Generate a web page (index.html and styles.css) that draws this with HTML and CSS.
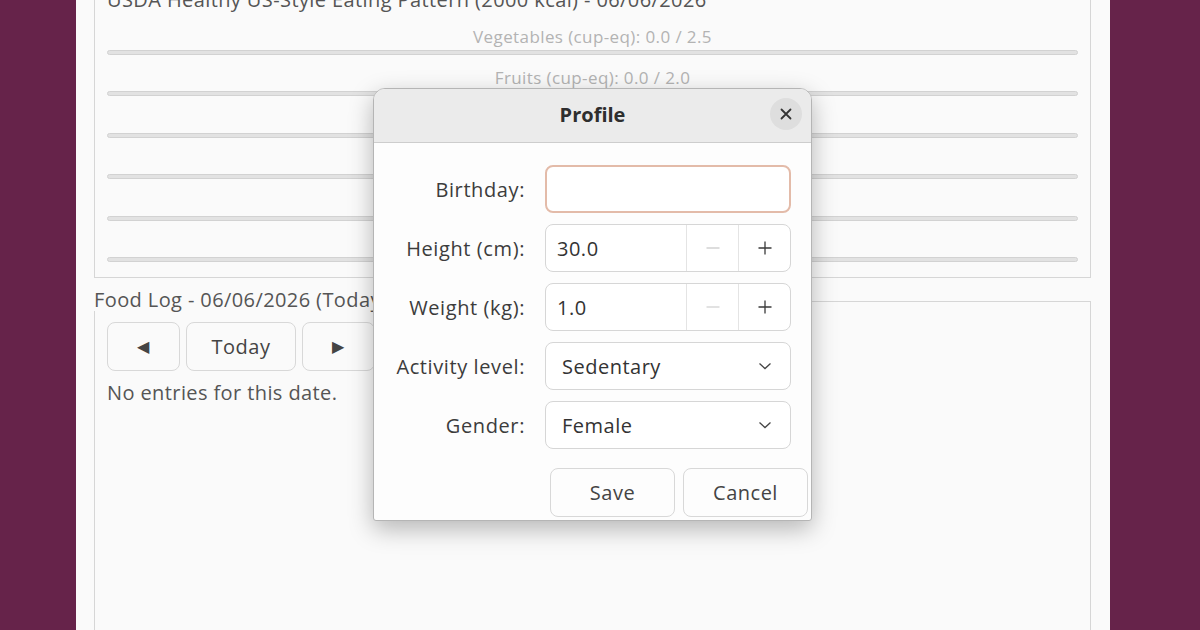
FILE: index.html
```html
<!DOCTYPE html>
<html>
<head>
  <title>Nutrition Tracker - Profile</title>
  <link rel="stylesheet" href="styles.css">
</head>
<body>

  <div class="desktop">
    <div class="window">

      <section class="frame goals">
        <div class="goals-title">USDA Healthy US-Style Eating Pattern (2000 kcal) - 06/06/2026</div>
        <div class="goal"><div class="goal-label">Vegetables (cup-eq): 0.0 / 2.5</div><div class="bar"></div></div>
        <div class="goal"><div class="goal-label">Fruits (cup-eq): 0.0 / 2.0</div><div class="bar"></div></div>
        <div class="goal"><div class="goal-label">Grains (oz-eq): 0.0 / 6.0</div><div class="bar"></div></div>
        <div class="goal"><div class="goal-label">Dairy (cup-eq): 0.0 / 3.0</div><div class="bar"></div></div>
        <div class="goal"><div class="goal-label">Protein Foods (oz-eq): 0.0 / 5.5</div><div class="bar"></div></div>
        <div class="goal"><div class="goal-label">Oils (g): 0.0 / 27.0</div><div class="bar"></div></div>
      </section>

      <section class="frame food-log">
        <div class="frame-label">Food Log - 06/06/2026 (Today)</div>
        <div class="nav">
          <button class="btn nav-arrow">&#9664;</button>
          <button class="btn nav-today">Today</button>
          <button class="btn nav-arrow">&#9654;</button>
        </div>
        <p class="empty">No entries for this date.</p>
      </section>

    </div>

    <!-- modal dialog on top of the main window -->
    <div class="dialog">
      <div class="dialog-header">
        <span class="dialog-title">Profile</span>
        <button class="close-btn">
          <svg width="12" height="12" viewBox="0 0 12 12"><path d="M1.5 1.5 L10.5 10.5 M10.5 1.5 L1.5 10.5" stroke="#333" stroke-width="1.8" stroke-linecap="round"/></svg>
        </button>
      </div>

      <div class="dialog-body">
        <div class="form-grid">
          <label>Birthday:</label>
          <div class="field focused"></div>

          <label>Height (cm):</label>
          <div class="field spin">
            <span class="spin-value">30.0</span>
            <span class="spin-btn disabled"><svg width="16" height="16" viewBox="0 0 16 16"><path d="M1.5 8 H14.5" stroke="#d2d2d2" stroke-width="1.3"/></svg></span>
            <span class="spin-btn"><svg width="16" height="16" viewBox="0 0 16 16"><path d="M1.5 8 H14.5 M8 1.5 V14.5" stroke="#3a3a3a" stroke-width="1.3"/></svg></span>
          </div>

          <label>Weight (kg):</label>
          <div class="field spin">
            <span class="spin-value">1.0</span>
            <span class="spin-btn disabled"><svg width="16" height="16" viewBox="0 0 16 16"><path d="M1.5 8 H14.5" stroke="#d2d2d2" stroke-width="1.3"/></svg></span>
            <span class="spin-btn"><svg width="16" height="16" viewBox="0 0 16 16"><path d="M1.5 8 H14.5 M8 1.5 V14.5" stroke="#3a3a3a" stroke-width="1.3"/></svg></span>
          </div>

          <label>Activity level:</label>
          <div class="field combo">
            <span>Sedentary</span>
            <svg width="14" height="8" viewBox="0 0 14 8"><path d="M1.5 1.5 L7 6.5 L12.5 1.5" fill="none" stroke="#444" stroke-width="1.3"/></svg>
          </div>

          <label>Gender:</label>
          <div class="field combo">
            <span>Female</span>
            <svg width="14" height="8" viewBox="0 0 14 8"><path d="M1.5 1.5 L7 6.5 L12.5 1.5" fill="none" stroke="#444" stroke-width="1.3"/></svg>
          </div>
        </div>

        <div class="dialog-actions">
          <button class="btn action-btn">Save</button>
          <button class="btn action-btn">Cancel</button>
        </div>
      </div>
    </div>
  </div>

</body>
</html>
```

FILE: styles.css
```css
body {
  margin: 0;
  background: #66234a;
  font-family: "Open Sans", "Noto Sans", sans-serif;
  color: #3c3c3c;
  overflow: hidden;
}

.desktop {
  position: relative;
  width: 1200px;
  height: 630px;
  overflow: hidden;
}

.window {
  margin-left: 76px;
  margin-top: -24px;
  width: 1034px;
  height: 700px;
  box-sizing: border-box;
  padding: 0 19px 0 18px;
  background: #fafafa;
  display: flex;
  flex-direction: column;
  gap: 23px;
}

.frame {
  border: 1px solid #d6d6d6;
}

/* nutrition goals */
.goals {
  padding: 11px 12px 15px 12px;
}

.goals-title {
  font-size: 20px;
  letter-spacing: 0.4px;
  line-height: 24px;
  color: #555;
  margin-bottom: 15px;
}

.goal {
  margin-bottom: 13.4px;
}

.goal:last-child {
  margin-bottom: 0;
}

.goal-label {
  text-align: center;
  font-size: 17px;
  letter-spacing: 0.4px;
  line-height: 20px;
  color: #b3b3b3;
}

.bar {
  margin-top: 3px;
  height: 3px;
  border: 1px solid #d2d2d2;
  background: #e2e2e2;
  border-radius: 3px;
}

/* food log */
.food-log {
  flex: 1;
  padding: 0 12px;
}

.frame-label {
  width: fit-content;
  margin: -13px 0 0 -13px;
  padding-right: 4px;
  background: #fafafa;
  font-size: 20px;
  letter-spacing: 0.4px;
  line-height: 22px;
  color: #555;
}

.nav {
  display: flex;
  gap: 6px;
  margin-top: 11px;
}

.btn {
  font-family: inherit;
  font-size: 20px;
  letter-spacing: 0.5px;
  color: #444;
  background: #fafafa;
  border: 1px solid #d8d8d8;
  border-radius: 8px;
  height: 49px;
  cursor: pointer;
}

.nav-arrow {
  width: 73px;
  font-size: 16px;
}

.nav-today {
  width: 110px;
}

.empty {
  margin: 11px 0 0 0;
  font-size: 20px;
  letter-spacing: 0.4px;
  line-height: 22px;
  color: #555;
}

/* profile dialog */
.dialog {
  position: absolute;
  left: 373px;
  top: 88px;
  width: 439px;
  height: 433px;
  box-sizing: border-box;
  background: #fdfdfd;
  border: 1px solid #b5b5b5;
  border-radius: 12px 12px 3px 3px;
  box-shadow: 0 8px 24px rgba(0, 0, 0, 0.28);
  overflow: hidden;
}

.dialog-header {
  position: relative;
  height: 53px;
  background: #ebebeb;
  border-bottom: 1px solid #cdcdcd;
  display: flex;
  align-items: center;
  justify-content: center;
}

.dialog-title {
  font-weight: bold;
  font-size: 20px;
  color: #2e2e2e;
  margin-top: -3px;
}

.close-btn {
  position: absolute;
  right: 9px;
  top: 9px;
  width: 32px;
  height: 32px;
  border: none;
  border-radius: 50%;
  background: #dedede;
  display: flex;
  align-items: center;
  justify-content: center;
  padding: 0;
}

.dialog-body {
  padding: 22px 0 0 0;
}

.form-grid {
  display: grid;
  grid-template-columns: 151px 246px;
  column-gap: 20px;
  row-gap: 11px;
}

.form-grid label {
  text-align: right;
  font-size: 20px;
  letter-spacing: 0.6px;
  align-self: center;
  color: #3c3c3c;
}

.field {
  height: 48px;
  box-sizing: border-box;
  border: 1px solid #d6d6d6;
  border-radius: 8px;
  background: #fff;
  font-size: 20px;
  letter-spacing: 0.5px;
  color: #333;
  display: flex;
  align-items: center;
}

.field.focused {
  border: 2px solid #e3bba9;
}

.spin-value {
  flex: 1;
  padding-left: 11px;
}

.spin-btn {
  width: 51px;
  height: 100%;
  border-left: 1px solid #e4e4e4;
  display: flex;
  align-items: center;
  justify-content: center;
}

.combo {
  justify-content: space-between;
  padding: 0 18px 0 16px;
}

.dialog-actions {
  display: flex;
  justify-content: flex-end;
  gap: 8px;
  margin: 19px 3px 0 0;
}

.action-btn {
  width: 125px;
  background: #fdfdfd;
}
```
